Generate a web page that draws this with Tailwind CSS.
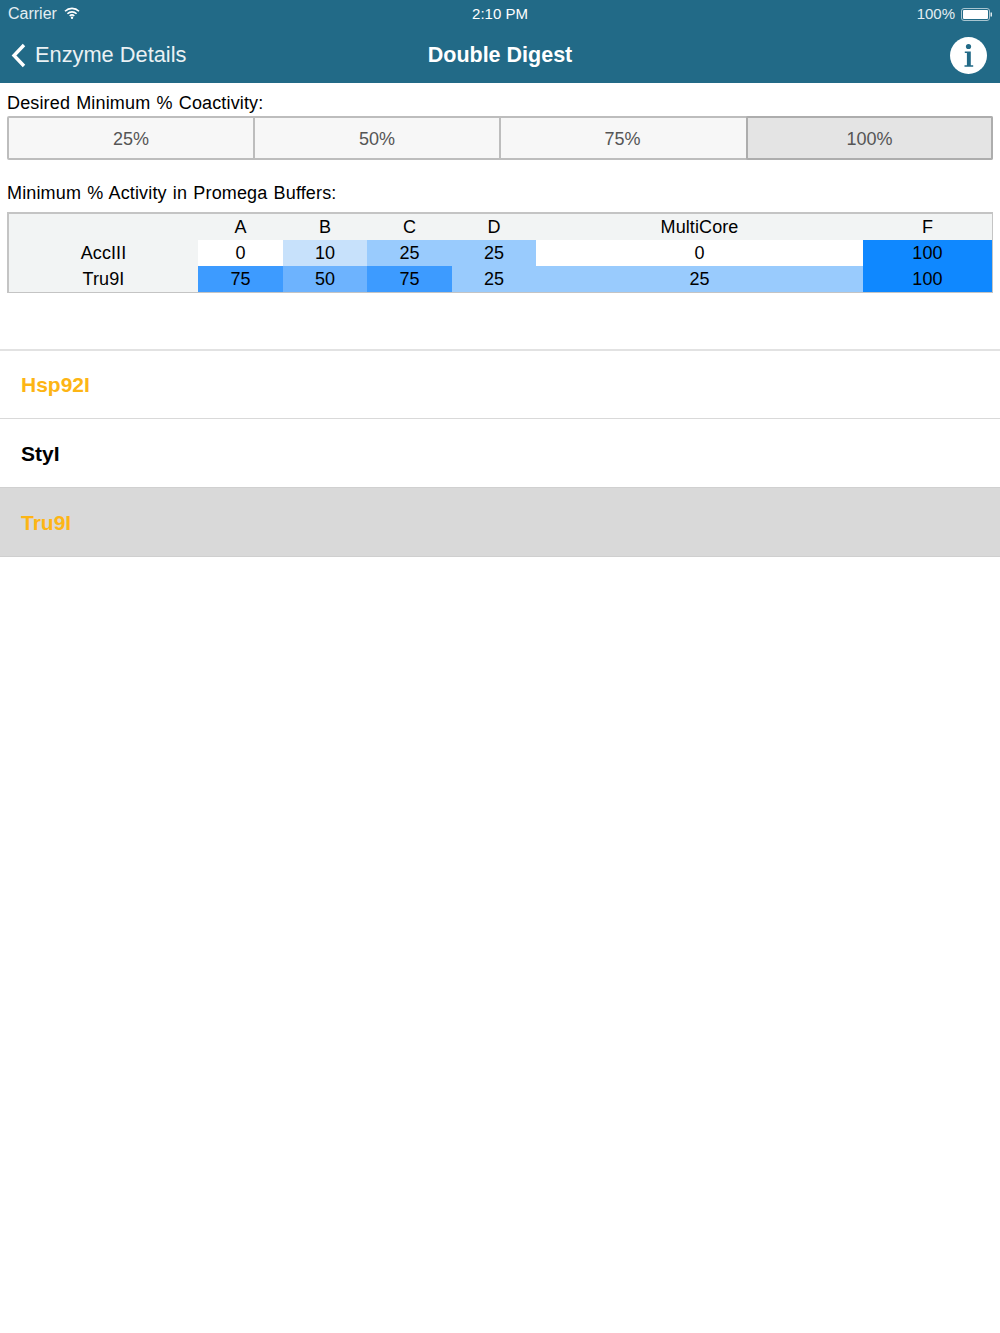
<!DOCTYPE html>
<html>
<head>
<meta charset="utf-8">
<script src="https://cdn.jsdelivr.net/npm/@tailwindcss/browser@4"></script>
</head>
<body class="bg-white font-['Liberation_Sans',Arial,sans-serif] w-[1000px] h-[1333px] overflow-hidden">
<header class="bg-[#226a87] h-[83px] text-white">
  <div class="h-[28px] px-2 flex items-center justify-between text-[15px] relative">
    <div class="flex items-center gap-[7px] text-[#e4eef2]">
      <span class="text-[16px]">Carrier</span>
      <svg width="16" height="12" viewBox="0 0 16 12" class="mb-[3px]"><path d="M1 4.2a10 10 0 0 1 14 0M3.4 6.7a6.6 6.6 0 0 1 9.2 0M5.7 9a3.3 3.3 0 0 1 4.6 0" fill="none" stroke="#fff" stroke-width="1.6"/><circle cx="8" cy="10.8" r="1.2" fill="#fff"/></svg>
    </div>
    <span class="absolute left-0 right-0 text-center font-medium">2:10 PM</span>
    <div class="flex items-center gap-[6px] text-[#e4eef2]">
      <span>100%</span>
      <svg width="31" height="13" viewBox="0 0 31 13"><rect x="0.5" y="0.5" width="28" height="12" rx="2.5" fill="none" stroke="#a9c5d0"/><rect x="2" y="2" width="25" height="9" rx="1" fill="#fff"/><rect x="29.5" y="4.5" width="1.5" height="4" fill="#dfe9ee"/></svg>
    </div>
  </div>
  <div class="h-[55px] flex items-center justify-between pl-[11px] pr-[13px] relative">
    <div class="flex items-center gap-[9px] pb-[1px]">
      <svg width="15" height="25" viewBox="0 0 15 25"><path d="M13 2 L3 12.5 L13 23" fill="none" stroke="#fff" stroke-width="3.4"/></svg>
      <span class="text-[21.8px] text-[#eaf1f4]">Enzyme Details</span>
    </div>
    <span class="absolute left-0 right-0 text-center text-[21.5px] font-bold pb-[1px]">Double Digest</span>
    <svg width="37" height="37" viewBox="0 0 37 37" class="mb-[1px]"><circle cx="18.5" cy="18.5" r="18.5" fill="#fff"/><circle cx="18.5" cy="9.5" r="2.6" fill="#226a87"/><path d="M14.8 14.6h6v13.7h2.4v1.5h-8.7v-1.5h2.4v-12.2h-2.1z" fill="#226a87"/></svg>
  </div>
</header>
<main>
  <p class="pl-[7px] pt-[10px] text-[18px] leading-[21px] text-black tracking-[0.15px] [word-spacing:1px]">Desired Minimum % Coactivity:</p>
  <div class="mx-[7px] mt-[2px] h-[44px] grid grid-cols-[246px_246px_246px_1fr] border-2 border-[#bdbdbd] rounded-[2px] text-[18px] text-[#555] bg-[#f7f7f7]">
    <div class="flex items-center justify-center pt-[2px] border-r-2 border-[#bdbdbd]">25%</div>
    <div class="flex items-center justify-center pt-[2px] border-r-2 border-[#bdbdbd]">50%</div>
    <div class="flex items-center justify-center pt-[2px] pr-[3px]">75%</div>
    <div class="flex items-center justify-center pt-[2px] bg-[#e4e4e4] -my-[2px] -mr-[2px] -ml-[1px] border-2 border-[#adadad] rounded-[2px]">100%</div>
  </div>
  <p class="pl-[7px] mt-[23px] text-[18px] leading-[21px] text-black tracking-[0.15px] [word-spacing:1px]">Minimum % Activity in Promega Buffers:</p>
  <div class="mx-[7px] mt-[8px] border-2 border-r border-b border-[#c4c4c4] bg-[#f2f4f4] grid grid-cols-[189px_85px_84px_85px_84px_327px_129px] grid-rows-[26px_26px_26px] text-[18px] tracking-[0.1px] text-center text-black">
    <div></div>
    <div class="flex items-center justify-center">A</div>
    <div class="flex items-center justify-center">B</div>
    <div class="flex items-center justify-center">C</div>
    <div class="flex items-center justify-center">D</div>
    <div class="flex items-center justify-center">MultiCore</div>
    <div class="flex items-center justify-center">F</div>
    <div class="flex items-center justify-center">AccIII</div>
    <div class="flex items-center justify-center bg-white">0</div>
    <div class="flex items-center justify-center bg-[#c7e1fb]">10</div>
    <div class="flex items-center justify-center bg-[#99cbfd]">25</div>
    <div class="flex items-center justify-center bg-[#99cbfd]">25</div>
    <div class="flex items-center justify-center bg-white">0</div>
    <div class="flex items-center justify-center bg-[#0f88ff]">100</div>
    <div class="flex items-center justify-center">Tru9I</div>
    <div class="flex items-center justify-center bg-[#3d9bff]">75</div>
    <div class="flex items-center justify-center bg-[#6db3fe]">50</div>
    <div class="flex items-center justify-center bg-[#3d9bff]">75</div>
    <div class="flex items-center justify-center bg-[#99cbfd]">25</div>
    <div class="flex items-center justify-center bg-[#99cbfd]">25</div>
    <div class="flex items-center justify-center bg-[#0f88ff]">100</div>
  </div>
  <ul class="mt-[56px] border-t-2 border-[#e2e2e2] text-[21px] font-bold">
    <li class="h-[68px] flex items-center pl-[21px] text-[#fdb515] border-b border-[#d9d9d9]">Hsp92I</li>
    <li class="h-[69px] flex items-center pl-[21px] pt-[2px] text-black border-b border-[#d0d0d0]">StyI</li>
    <li class="h-[69px] flex items-center pl-[21px] pt-[2px] text-[#fdb515] bg-[#d9d9d9] border-b border-[#cfcfcf]">Tru9I</li>
  </ul>
</main>
</body>
</html>
